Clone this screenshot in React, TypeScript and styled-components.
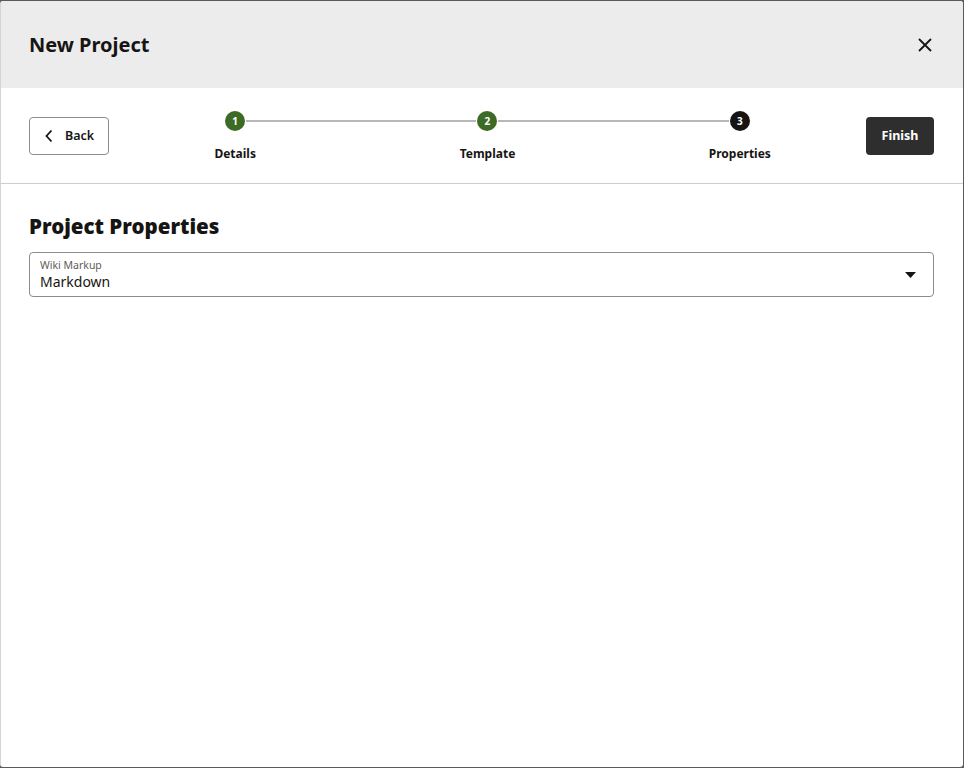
import React from "react";
import styled, { createGlobalStyle } from "styled-components";

const Global = createGlobalStyle`
  html, body { margin: 0; padding: 0; background: #5a5a5a; }
  body { font-family: "Noto Sans", Lato, sans-serif; color: #161513; }
  * { box-sizing: border-box; }
`;

const Dialog = styled.div`
  margin-top: 1px;
  width: 963px;
  height: 766px;
  background: #fff;
  border-left: 1px solid #d4d4d4;
  border-radius: 3px;
  display: flex;
  flex-direction: column;
  overflow: hidden;
`;

const Header = styled.header`
  height: 87px;
  background: #ececec;
  display: flex;
  align-items: center;
  justify-content: space-between;
  padding: 0 26px 0 28px;
`;

const Title = styled.h1`
  margin: 0;
  font-size: 20px;
  font-weight: 700;
  letter-spacing: 0;
`;

const IconButton = styled.button`
  border: none;
  background: transparent;
  padding: 0;
  width: 24px;
  height: 24px;
  display: flex;
  align-items: center;
  justify-content: center;
  cursor: pointer;
`;

const Toolbar = styled.div`
  height: 96px;
  border-bottom: 1px solid #cdcdcd;
  display: flex;
  align-items: center;
  padding: 0 29px 0 28px;
`;

const OutlineButton = styled.button`
  width: 80px;
  height: 38px;
  border: 1px solid #8c8c8c;
  border-radius: 4px;
  background: #fff;
  display: flex;
  align-items: center;
  gap: 11px;
  padding: 0 0 0 14px;
  font-family: inherit;
  font-size: 12.5px;
  font-weight: 600;
  color: #161513;
`;

const SolidButton = styled.button`
  width: 68px;
  height: 38px;
  border: none;
  border-radius: 4px;
  background: #2e2e2e;
  color: #fff;
  font-family: inherit;
  font-size: 12.5px;
  font-weight: 700;
`;

const Steps = styled.ol`
  flex: 1;
  margin: 0;
  padding: 0;
  list-style: none;
  display: grid;
  grid-template-columns: repeat(3, 1fr);
  margin-top: 1px;
`;

const Step = styled.li<{ $first?: boolean; $last?: boolean }>`
  position: relative;
  display: flex;
  flex-direction: column;
  align-items: center;
  gap: 15px;
  &::before, &::after {
    content: "";
    position: absolute;
    top: 9px;
    height: 2px;
    background: #b8b8b8;
  }
  &::before {
    left: 0;
    right: 50%;
    display: ${(p) => (p.$first ? "none" : "block")};
  }
  &::after {
    left: 50%;
    right: 0;
    display: ${(p) => (p.$last ? "none" : "block")};
  }
`;

const Dot = styled.span<{ $done?: boolean }>`
  position: relative;
  z-index: 1;
  width: 20px;
  height: 20px;
  border-radius: 50%;
  background: ${(p) => (p.$done ? "#3d6b26" : "#161513")};
  color: #fff;
  font-size: 10px;
  font-weight: 700;
  display: flex;
  align-items: center;
  justify-content: center;
  box-shadow: 0 0 0 1px #fff;
`;

const StepLabel = styled.span`
  font-size: 12px;
  font-weight: 700;
  line-height: 16px;
`;

const Body = styled.main`
  padding: 28px 29px 0 28px;
  display: flex;
  flex-direction: column;
  gap: 12px;
`;

const Heading = styled.h2`
  margin: 0;
  font-size: 20.5px;
  font-weight: 900;
  letter-spacing: 0;
`;

const Select = styled.div`
  height: 45px;
  border: 1px solid #8c8c8c;
  border-radius: 4px;
  display: flex;
  align-items: center;
  justify-content: space-between;
  padding: 0 17px 0 10px;
`;

const SelectText = styled.div`
  display: flex;
  flex-direction: column;
  line-height: 1;
`;

const SelectLabel = styled.span`
  font-size: 10.5px;
  color: #5f5e5c;
  margin-bottom: 4px;
`;

const SelectValue = styled.span`
  font-size: 14px;
  color: #161513;
`;

export default function App() {
  return (
    <>
      <Global />
      <Dialog>
        <Header>
          <Title>New Project</Title>
          <IconButton aria-label="Close">
            <svg width="14" height="14" viewBox="0 0 14 14">
              <path d="M1 1 L13 13 M13 1 L1 13" stroke="#161513" strokeWidth="1.8" />
            </svg>
          </IconButton>
        </Header>
        <Toolbar>
          <OutlineButton>
            <svg width="10" height="14" viewBox="0 0 10 14">
              <path d="M7.5 1.5 L2.5 7 L7.5 12.5" stroke="#161513" strokeWidth="1.8" fill="none" />
            </svg>
            Back
          </OutlineButton>
          <Steps>
            <Step $first>
              <Dot $done>1</Dot>
              <StepLabel>Details</StepLabel>
            </Step>
            <Step>
              <Dot $done>2</Dot>
              <StepLabel>Template</StepLabel>
            </Step>
            <Step $last>
              <Dot>3</Dot>
              <StepLabel>Properties</StepLabel>
            </Step>
          </Steps>
          <SolidButton>Finish</SolidButton>
        </Toolbar>
        <Body>
          <Heading>Project Properties</Heading>
          <Select>
            <SelectText>
              <SelectLabel>Wiki Markup</SelectLabel>
              <SelectValue>Markdown</SelectValue>
            </SelectText>
            <svg width="11" height="6" viewBox="0 0 11 6">
              <path d="M0 0 H11 L5.5 6 Z" fill="#161513" />
            </svg>
          </Select>
        </Body>
      </Dialog>
    </>
  );
}
